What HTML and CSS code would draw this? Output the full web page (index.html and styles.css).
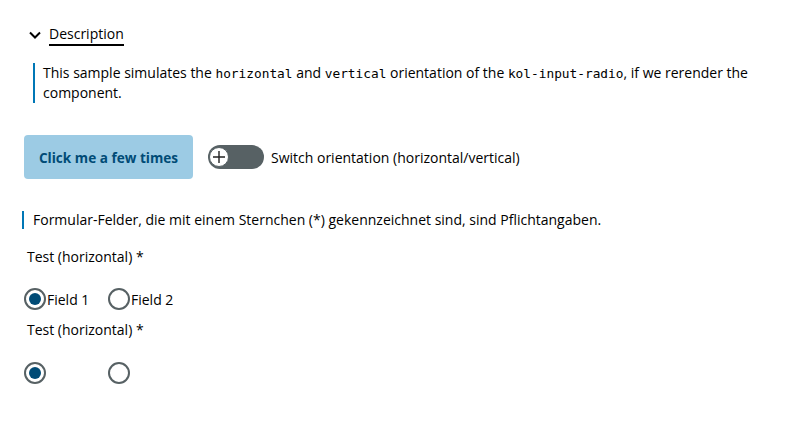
FILE: index.html
```html
<!DOCTYPE html>
<html lang="de">
<head>
<meta charset="utf-8">
<link rel="stylesheet" href="styles.css">
</head>
<body>
<div class="page">
  <div class="details">
    <div class="summary">
      <svg class="chev" width="12" height="8" viewBox="0 0 12 8"><path d="M1 1.5 L6 6.5 L11 1.5" fill="none" stroke="#000" stroke-width="2"/></svg>
      <span class="summary-text">Description</span>
    </div>
    <div class="desc">
      This sample simulates the <code>horizontal</code> and <code>vertical</code> orientation of the <code>kol-input-radio</code>, if we rerender the component.
    </div>
  </div>
  <div class="controls">
    <button class="btn">Click me a few times</button>
    <div class="toggle-wrap">
      <span class="toggle"><span class="knob"><svg width="14" height="14" viewBox="0 0 14 14"><path d="M7 1 V13 M1 7 H13" stroke="#222" stroke-width="1.4"/></svg></span></span>
      <span class="toggle-label">Switch orientation (horizontal/vertical)</span>
    </div>
  </div>
  <div class="hint">Formular-Felder, die mit einem Sternchen (*) gekennzeichnet sind, sind Pflichtangaben.</div>
  <div class="field">
    <div class="legend">Test (horizontal) *</div>
    <div class="radios">
      <label class="radio"><span class="circle checked"></span><span class="rlabel">Field 1</span></label>
      <label class="radio"><span class="circle"></span><span class="rlabel">Field 2</span></label>
    </div>
  </div>
  <div class="field">
    <div class="legend">Test (horizontal) *</div>
    <div class="radios nolabel">
      <label class="radio"><span class="circle checked"></span></label>
      <label class="radio"><span class="circle"></span></label>
    </div>
  </div>
</div>
</body>
</html>
```
FILE: styles.css
```css
html, body {
  margin: 0;
  padding: 0;
  background: #fff;
}
body {
  font-family: "Open Sans", "Noto Sans", sans-serif;
  font-size: 14px;
  color: #000;
}
.page {
  padding: 24px 24px 0 24px;
}
.summary {
  display: flex;
  align-items: center;
  gap: 8px;
  height: 22px;
  padding-left: 5px;
}
.chev { display: block; }
.summary-text {
  border-bottom: 2px solid #000;
  line-height: 20px;
}
.desc {
  margin: 17px 0 0 9px;
  border-left: 2px solid #0077b6;
  padding-left: 8px;
  line-height: 20px;
}
code {
  font-family: "DejaVu Sans Mono", monospace;
  font-size: 12.8px;
  line-height: 1;
}
.controls {
  display: flex;
  align-items: center;
  gap: 15px;
  margin-top: 32px;
}
.btn {
  width: 169px;
  height: 44px;
  border: none;
  border-radius: 4px;
  background: #9ccbe4;
  color: #004b76;
  font-family: inherit;
  font-weight: 700;
  font-size: 13.6px;
  padding: 0;
}
.toggle-wrap {
  display: flex;
  align-items: center;
  gap: 7px;
}
.toggle {
  width: 56px;
  height: 24px;
  border-radius: 12px;
  background: #576164;
  display: flex;
  align-items: center;
}
.knob {
  width: 20px;
  height: 20px;
  margin-left: 1px;
  border-radius: 50%;
  background: #fff;
  border: 1.5px solid #576164;
  box-sizing: border-box;
  display: flex;
  align-items: center;
  justify-content: center;
}
.knob svg { display: block; }
.hint {
  margin-top: 32px;
  margin-left: -2px;
  border-left: 2px solid #0077b6;
  padding-left: 9px;
  line-height: 18px;
}
.field { margin-top: 18px; }
.field + .field { margin-top: 10px; }
.legend {
  padding-left: 3px;
  line-height: 20px;
}
.radios {
  display: flex;
  margin-top: 21px;
  height: 22px;
  align-items: center;
}
.radio {
  display: flex;
  align-items: center;
}
.radios .radio:first-child { width: 84px; }
.circle {
  width: 22px;
  height: 22px;
  border-radius: 50%;
  border: 2px solid #576164;
  box-sizing: border-box;
  display: flex;
  align-items: center;
  justify-content: center;
  background: #fff;
}
.circle.checked::after {
  content: "";
  width: 12px;
  height: 12px;
  border-radius: 50%;
  background: #004b76;
}
.rlabel { margin-left: 1px; }
.nolabel { margin-top: 22px; }
```
